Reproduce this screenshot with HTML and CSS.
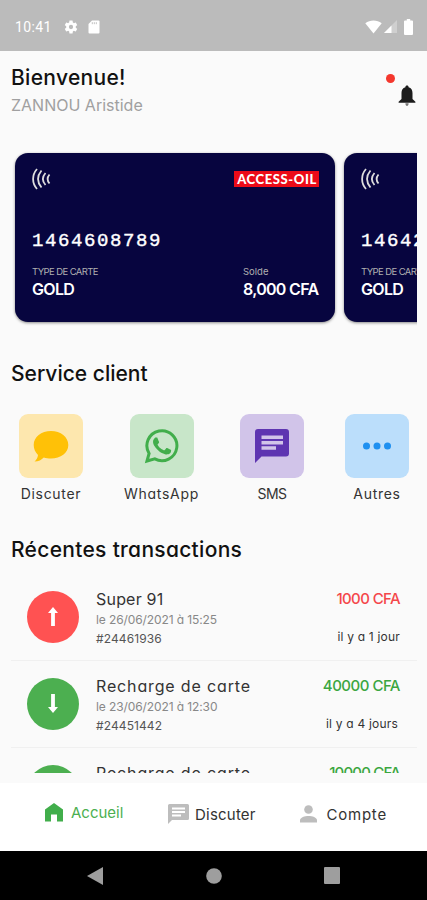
FILE: index.html
```html
<!DOCTYPE html>
<html lang="fr">
<head>
    <meta charset="UTF-8">
    <meta name="viewport" content="width=device-width, initial-scale=1.0">
    <link rel="stylesheet" href="styles.css">
    <title>Access-Oil</title>
</head>
<body>
    <div class="status-bar">
        <span class="time">10:41</span>
        <svg class="gear" width="16" height="16" viewBox="0 0 24 24"><path fill="#fff" d="M19.14 12.94c.04-.3.06-.61.06-.94 0-.32-.02-.64-.07-.94l2.03-1.58a.49.49 0 0 0 .12-.61l-1.92-3.32a.488.488 0 0 0-.59-.22l-2.39.96c-.5-.38-1.03-.7-1.62-.94l-.36-2.54a.484.484 0 0 0-.48-.41h-3.84c-.24 0-.43.17-.47.41l-.36 2.54c-.59.24-1.13.57-1.62.94l-2.39-.96c-.22-.08-.47 0-.59.22L2.74 8.87c-.12.21-.08.47.12.61l2.03 1.58c-.05.3-.09.63-.09.94s.02.64.07.94l-2.03 1.58a.49.49 0 0 0-.12.61l1.92 3.32c.12.22.37.29.59.22l2.39-.96c.5.38 1.03.7 1.62.94l.36 2.54c.05.24.24.41.48.41h3.84c.24 0 .44-.17.47-.41l.36-2.54c.59-.24 1.13-.56 1.62-.94l2.39.96c.22.08.47 0 .59-.22l1.92-3.32c.12-.22.07-.47-.12-.61l-2.01-1.58zM12 15.2A3.2 3.2 0 1 1 12 8.800a3.2 3.2 0 0 1 0 6.400z"/></svg>
        <svg class="sd" width="12" height="14" viewBox="0 0 12 14"><path fill="#fff" d="M4 .5h6.500a1 1 0 0 1 1 1v11a1 1 0 0 1-1 1H1.500a1 1 0 0 1-1-1V4z"/><path stroke="#bbb" stroke-width=".9" d="M4.300 2.200v2M6.300 2.200v2M8.300 2.200v2"/></svg>
        <svg class="wifi" width="17" height="14" viewBox="0 0 17 14"><path fill="#fff" d="M.3 3.200C5 -.3 12 -.3 16.700 3.200L8.500 13.500z"/></svg>
        <svg class="signal" width="13" height="13" viewBox="0 0 13 13"><path fill="#fff" opacity=".3" d="M0 13 13 0v13z"/><path fill="#fff" d="M0 13 7.500 5.500V13z"/></svg>
        <svg class="battery" width="9" height="16" viewBox="0 0 9 16"><path fill="#fff" d="M2.800 0h3.400v1.500H8a1 1 0 0 1 1 1V15a1 1 0 0 1-1 1H1a1 1 0 0 1-1-1V2.500a1 1 0 0 1 1-1h1.800z"/></svg>
    </div>

    <main class="content">
        <header class="header">
            <div>
                <h1 class="title welcome">Bienvenue!</h1>
                <p class="user">ZANNOU Aristide</p>
            </div>
            <div class="notif">
                <svg width="18" height="22" viewBox="0 0 18 22"><path fill="#1c1c1c" d="M9 .5c1 0 1.600.7 1.600 1.700 2.700.7 3.900 3 3.900 5.800v6l2.900 2.700v1.100H.6v-1.100L3.500 14V8c0-2.800 1.200-5.100 3.900-5.800C7.400 1.200 8 .5 9 .5z"/><path fill="#777" d="M7.400 18.300h3.200c0 3.700-3.200 3.700-3.200 0z"/></svg>
                <span class="dot"></span>
            </div>
        </header>

        <section class="cards">
            <article class="card">
                <div class="card-top">
                    <svg class="nfc" width="19" height="22" viewBox="0 0 19 22"><path d="M5 1C-.2 7-.2 15 5 21M9.500 2.500C5 8 5 14 9.500 19.500M13.500 5c-3.500 4-3.500 8 0 12M17.500 6.500c-2.500 3-2.500 6 0 9"/></svg>
                    <span class="brand">ACCESS-OIL</span>
                </div>
                <p class="number">1464608789</p>
                <div class="card-bottom">
                    <div>
                        <p class="caption type">TYPE DE CARTE</p>
                        <p class="value">GOLD</p>
                    </div>
                    <div class="balance">
                        <p class="caption">Solde</p>
                        <p class="value">8,000 CFA</p>
                    </div>
                </div>
            </article>
            <article class="card">
                <div class="card-top">
                    <svg class="nfc" width="19" height="22" viewBox="0 0 19 22"><path d="M5 1C-.2 7-.2 15 5 21M9.500 2.500C5 8 5 14 9.500 19.500M13.500 5c-3.500 4-3.500 8 0 12M17.500 6.500c-2.500 3-2.500 6 0 9"/></svg>
                </div>
                <p class="number">14642</p>
                <div class="card-bottom">
                    <div>
                        <p class="caption type">TYPE DE CARTE</p>
                        <p class="value">GOLD</p>
                    </div>
                </div>
            </article>
        </section>

        <h2 class="title service-title">Service client</h2>
        <section class="services">
            <div class="service">
                <div class="tile yellow">
                    <svg width="64" height="64" viewBox="0 0 64 64"><path fill="#ffc107" d="M32 17c9.700 0 17.300 6 17.300 14S41.700 44.500 32 44.500c-2.600 0-5-.3-7.200-1.100-2.200 2.300-5.300 4-9.300 4.200 1.900-1.900 3.200-4 3.500-6.700-2.700-2.500-4.300-6-4.300-9.900 0-8 7.600-14 17.300-14z"/></svg>
                </div>
                <p>Discuter</p>
            </div>
            <div class="service whatsapp">
                <div class="tile green">
                    <svg width="36" height="36" viewBox="0 0 24 24"><path fill="#41ae4b" d="M17.472 14.382c-.297-.149-1.758-.867-2.030-.967-.273-.099-.471-.148-.670.150-.197.297-.767.966-.940 1.164-.173.199-.347.223-.644.075-.297-.150-1.255-.463-2.390-1.475-.883-.788-1.480-1.761-1.653-2.059-.173-.297-.018-.458.130-.606.134-.133.298-.347.446-.520.149-.174.198-.298.298-.497.099-.198.050-.371-.025-.520-.075-.149-.669-1.612-.916-2.207-.242-.579-.487-.500-.669-.510-.173-.008-.371-.010-.570-.010-.198 0-.520.074-.792.372-.272.297-1.040 1.016-1.040 2.479 0 1.462 1.065 2.875 1.213 3.074.149.198 2.096 3.200 5.077 4.487.709.306 1.262.489 1.694.625.712.227 1.360.195 1.871.118.571-.085 1.758-.719 2.006-1.413.248-.694.248-1.289.173-1.413-.074-.124-.272-.198-.570-.347"/><path fill="none" stroke="#41ae4b" stroke-width="2" d="M2 22 3.400 17A10 10 0 1 1 7.200 20.600z"/></svg>
                </div>
                <p>WhatsApp</p>
            </div>
            <div class="service">
                <div class="tile purple">
                    <svg width="34" height="34" viewBox="0 0 34 34"><path fill="#5e35b1" d="M3 0h28a3 3 0 0 1 3 3v21.500a3 3 0 0 1-3 3H6.500L0 34V3a3 3 0 0 1 3-3z"/><path fill="#d1c4e9" d="M6.500 6.500h21.500v3.500H6.500zM6.500 12h21.500v3.500H6.500zM6.500 17.300h14.500v3.400H6.500z"/></svg>
                </div>
                <p class="sms">SMS</p>
            </div>
            <div class="service">
                <div class="tile blue">
                    <svg width="28" height="8" viewBox="0 0 28 8"><g fill="#1e90f0"><circle cx="3.500" cy="4" r="3.500"/><circle cx="14" cy="4" r="3.500"/><circle cx="24.500" cy="4" r="3.500"/></g></svg>
                </div>
                <p>Autres</p>
            </div>
        </section>

        <h2 class="title recent-title">Récentes transactions</h2>
        <section class="transactions">
            <div class="row">
                <span class="round red"><svg width="10" height="20" viewBox="0 0 10 20"><path fill="#fff" d="M5 0 10 6H6.900v13H3.100V6H0z"/></svg></span>
                <div class="info">
                    <p class="name super">Super 91</p>
                    <p class="date">le 26/06/2021 à 15:25</p>
                    <p class="ref">#24461936</p>
                </div>
                <div class="side">
                    <p class="amount debit">1000 CFA</p>
                    <p class="ago">il y a 1 jour</p>
                </div>
            </div>
            <div class="row">
                <span class="round credit-bg"><svg width="10" height="20" viewBox="0 0 10 20"><path fill="#fff" d="M5 19 10 13H6.900V0H3.100v13H0z"/></svg></span>
                <div class="info">
                    <p class="name">Recharge de carte</p>
                    <p class="date">le 23/06/2021 à 12:30</p>
                    <p class="ref">#24451442</p>
                </div>
                <div class="side">
                    <p class="amount credit">40000 CFA</p>
                    <p class="ago days">il y a 4 jours</p>
                </div>
            </div>
            <div class="row">
                <span class="round credit-bg"></span>
                <div class="info">
                    <p class="name">Recharge de carte</p>
                </div>
                <div class="side">
                    <p class="amount credit narrow">10000 CFA</p>
                </div>
            </div>
        </section>
    </main>

    <nav class="tabs">
        <a class="tab active">
            <svg width="18" height="19" viewBox="0 0 18 19"><path fill="#41ae4b" d="M9 0 18 6.500V18.500h-6v-7H6v7H0V6.500z"/></svg>
            <span>Accueil</span>
        </a>
        <a class="tab chat">
            <svg width="21" height="20" viewBox="0 0 21 20"><path fill="#bdbdbd" d="M1.500 0h18A1.500 1.500 0 0 1 21 1.500v13a1.500 1.500 0 0 1-1.500 1.500H4L0 20V1.500A1.500 1.500 0 0 1 1.500 0z"/><path fill="#fff" d="M4 3.500h13v2H4zM4 7h13v2H4zM4 10.400h9v2H4z"/></svg>
            <span>Discuter</span>
        </a>
        <a class="tab account">
            <svg width="17" height="18" viewBox="0 0 17 18"><g fill="#bdbdbd"><circle cx="8.500" cy="4.500" r="4.300"/><path d="M0 17.500v-2.300c0-2.700 4.800-4.200 8.500-4.200s8.500 1.500 8.500 4.200v2.300z"/></g></svg>
            <span>Compte</span>
        </a>
    </nav>

    <div class="system-bar">
        <svg width="16" height="18" viewBox="0 0 16 18"><path fill="#9e9e9e" d="M0 9 16 0v18z"/></svg>
        <svg width="16" height="16" viewBox="0 0 16 16"><circle fill="#9e9e9e" cx="8" cy="8" r="7.800"/></svg>
        <svg width="16" height="17" viewBox="0 0 16 17"><rect fill="#9e9e9e" width="16" height="17" rx="1"/></svg>
    </div>
</body>
</html>
```
FILE: styles.css
```css
*{
    box-sizing: border-box;
}
body{
    margin: 0;
    width: 427px;
    height: 900px;
    overflow: hidden;
    display: flex;
    flex-direction: column;
    font-family: "Inter", sans-serif;
    font-feature-settings: "cv11";
    background-color: #fafafa;
    color: #333;
    white-space: nowrap;
}
h1, h2, p{
    margin: 0;
    font-weight: 400;
}
svg{
    display: block;
    flex: none;
}

/* status bar */
.status-bar{
    flex: none;
    height: 51px;
    padding: 2px 14px 0 15px;
    display: flex;
    align-items: center;
    background-color: #bbb;
}
.time{
    width: 48px;
    font-family: "Roboto", sans-serif;
    font-size: 14px;
    letter-spacing: 0.4px;
    color: #fff;
}
.gear{
    margin-right: 9px;
}
.wifi{
    margin-left: auto;
}
.signal{
    margin: 0 7px 0 2px;
}

/* page */
.content{
    flex: none;
    height: 722px;
    padding: 0 10px 0 11px;
    overflow: hidden;
}
.header{
    display: flex;
    justify-content: space-between;
    height: 92px;
    padding-top: 13px;
}
.title{
    font-size: 21px;
    font-weight: 500;
    line-height: 28px;
    color: #111;
}
.welcome{
    letter-spacing: 0.3px;
}
.user{
    margin-top: -1px;
    font-size: 16px;
    line-height: 28px;
    color: #a0a0a0;
}
.notif{
    position: relative;
    padding-top: 21px;
    margin-right: 1px;
}
.dot{
    position: absolute;
    top: 10px;
    left: -12px;
    width: 9px;
    height: 9px;
    border-radius: 50%;
    background-color: #f4372d;
}

/* cards */
.cards{
    display: flex;
    gap: 9px;
    height: 188px;
    padding: 10px 0 0 4px;
    overflow: hidden;
}
.card{
    flex: none;
    width: 320px;
    height: 169px;
    padding: 15px 16px 0 17px;
    border-radius: 13px;
    background-color: #07053f;
    box-shadow: 0 1px 3px rgba(0, 0, 0, 0.45);
    color: #fff;
}
.card-top{
    display: flex;
    justify-content: space-between;
    height: 62px;
}
.nfc path{
    fill: none;
    stroke: #ddd;
    stroke-width: 1.8;
}
.brand{
    width: 85px;
    height: 16px;
    margin-top: 3px;
    padding-left: 1px;
    background-color: #ec0b18;
    font-family: "Lato", sans-serif;
    font-size: 13px;
    font-weight: 900;
    letter-spacing: 0.6px;
    line-height: 16px;
    text-align: center;
}
.number{
    font-family: "Liberation Mono", monospace;
    font-size: 19px;
    letter-spacing: 1.6px;
    line-height: 22px;
    -webkit-text-stroke: 0.4px #fff;
}
.card-bottom{
    display: flex;
    justify-content: space-between;
    margin-top: 14px;
}
.balance{
    width: 76px;
}
.caption{
    font-size: 9.5px;
    line-height: 12px;
    color: #b0b0b0;
}
.type{
    letter-spacing: -0.6px;
}
.value{
    margin-top: 1px;
    font-size: 16px;
    font-weight: 600;
    letter-spacing: -0.7px;
    line-height: 20px;
}

/* services */
.service-title{
    margin-top: 29px;
}
.services{
    display: flex;
    justify-content: space-between;
    margin-top: 26px;
    padding: 0 8px;
}
.service{
    width: 64px;
    display: flex;
    flex-direction: column;
    align-items: center;
    font-size: 14px;
    letter-spacing: 0.7px;
    line-height: 20px;
}
.whatsapp{
    width: 75px;
}
.sms{
    letter-spacing: -0.6px;
}
.tile{
    width: 64px;
    height: 64px;
    margin-bottom: 6px;
    display: flex;
    align-items: center;
    justify-content: center;
    border-radius: 9px;
}
.yellow{
    background-color: #fde7ae;
}
.green{
    background-color: #c8e6c9;
}
.purple{
    background-color: #d1c4e9;
}
.blue{
    background-color: #bbdefb;
}

/* transactions */
.recent-title{
    margin-top: 32px;
    letter-spacing: 0.3px;
}
.transactions{
    margin-top: 10px;
}
.row{
    display: flex;
    height: 87px;
    padding: 14px 17px 0 16px;
    border-bottom: 1px solid #f0f0f0;
}
.round{
    flex: none;
    width: 52px;
    height: 52px;
    margin-top: 3px;
    display: flex;
    align-items: center;
    justify-content: center;
    border-radius: 50%;
}
.red{
    background-color: #ff5252;
}
.credit-bg{
    background-color: #4caf50;
}
.info{
    margin-left: 17px;
}
.name{
    font-size: 16px;
    letter-spacing: 0.85px;
    line-height: 22px;
}
.super{
    letter-spacing: 0.2px;
}
.date, .ref{
    font-size: 12px;
    letter-spacing: -0.1px;
    line-height: 19px;
    color: #888;
}
.ref{
    letter-spacing: 0.1px;
    color: #555;
}
.side{
    margin-left: auto;
    text-align: right;
}
.amount{
    font-size: 15px;
    font-weight: 500;
    letter-spacing: -0.5px;
    line-height: 22px;
}
.narrow{
    letter-spacing: -0.8px;
}
.debit{
    letter-spacing: -0.6px;
    color: #f4474a;
}
.credit{
    color: #3ba640;
}
.ago{
    margin-top: 17px;
    font-size: 12px;
    letter-spacing: 0.2px;
    line-height: 20px;
}
.days{
    padding-right: 2px;
}

/* bottom tabs */
.tabs{
    flex: none;
    height: 68px;
    margin-top: 10px;
    padding: 0 40px 6px 45px;
    display: flex;
    align-items: center;
    justify-content: space-between;
    background-color: #fff;
}
.tab{
    display: flex;
    align-items: center;
    gap: 8px;
    font-size: 15px;
}
.active{
    padding-bottom: 3px;
    color: #4caf50;
}
.chat{
    gap: 6px;
    letter-spacing: 0.2px;
}
.account{
    gap: 9px;
    letter-spacing: 0.8px;
}
.system-bar{
    flex: none;
    height: 49px;
    padding: 0 87px;
    display: flex;
    align-items: center;
    justify-content: space-between;
    background-color: #000;
}
```
